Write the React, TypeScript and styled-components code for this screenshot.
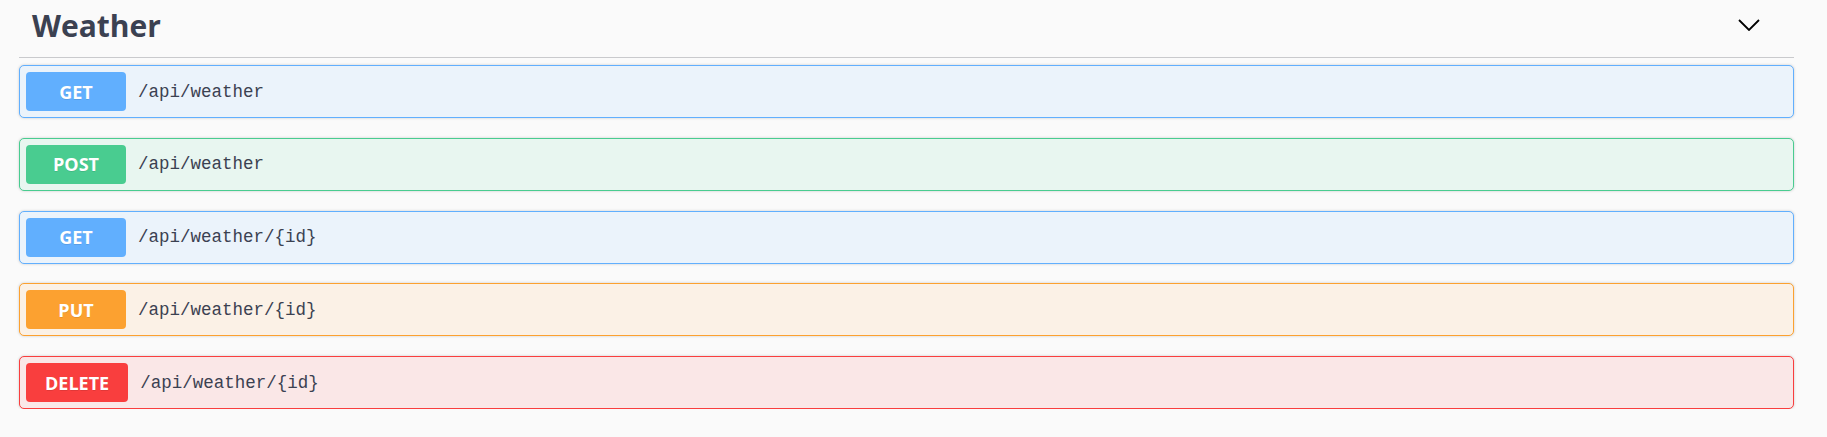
import React from "react";
import styled, { createGlobalStyle } from "styled-components";

const GlobalStyle = createGlobalStyle`
  html, body {
    margin: 0;
    padding: 0;
    background: #fafafa;
  }
`;

type Method = "GET" | "POST" | "PUT" | "DELETE";

const palette: Record<Method, { main: string; bg: string }> = {
  GET: { main: "#61affe", bg: "#ebf3fb" },
  POST: { main: "#49cc90", bg: "#e8f6f0" },
  PUT: { main: "#fca130", bg: "#fbf1e6" },
  DELETE: { main: "#f93e3e", bg: "#fae7e7" },
};

const Page = styled.div`
  width: 1775px;
  padding-left: 19px;
  font-family: "Open Sans", "Noto Sans", sans-serif;
  color: #3b4151;
`;

const TagHeader = styled.div`
  display: flex;
  justify-content: space-between;
  align-items: flex-start;
  height: 57px;
  padding: 0 34px 0 13px;
  border-bottom: 1px solid #c9cacd;
`;

const Title = styled.h4`
  margin: 5px 0 0;
  font-size: 30px;
  line-height: 42px;
  font-weight: 700;
  color: #3b4151;
`;

const Chevron = styled.svg`
  margin-top: 19px;
  width: 22px;
  height: 12px;
`;

const List = styled.div`
  display: flex;
  flex-direction: column;
  gap: 19.75px;
  margin-top: 7px;
`;

const Block = styled.div<{ $method: Method }>`
  display: flex;
  align-items: center;
  padding: 6px;
  border: 1px solid ${(p) => palette[p.$method].main};
  background: ${(p) => palette[p.$method].bg};
  border-radius: 5px;
  box-shadow: 0 0 3px rgba(0, 0, 0, 0.19);
`;

const MethodBadge = styled.span<{ $method: Method }>`
  display: flex;
  align-items: center;
  justify-content: center;
  box-sizing: border-box;
  min-width: 100px;
  height: 39px;
  padding: 0 19px;
  border-radius: 4px;
  background: ${(p) => palette[p.$method].main};
  color: #fff;
  font-family: "Open Sans", "Noto Sans", sans-serif;
  font-weight: 700;
  font-size: 18px;
  text-shadow: 0 1px 0 rgba(0, 0, 0, 0.1);
`;

const Path = styled.span`
  padding: 0 12px;
  font-family: "Liberation Mono", "DejaVu Sans Mono", monospace;
  font-size: 17.5px;
  color: #3b4151;
`;

const ops: { method: Method; path: string }[] = [
  { method: "GET", path: "/api/weather" },
  { method: "POST", path: "/api/weather" },
  { method: "GET", path: "/api/weather/{id}" },
  { method: "PUT", path: "/api/weather/{id}" },
  { method: "DELETE", path: "/api/weather/{id}" },
];

export default function App() {
  return (
    <>
      <GlobalStyle />
      <Page>
        <TagHeader>
          <Title>Weather</Title>
          <Chevron viewBox="0 0 22 12" fill="none">
            <path d="M1 1 L11 11 L21 1" stroke="#000" strokeWidth="1.8" />
          </Chevron>
        </TagHeader>
        <List>
          {ops.map((op, i) => (
            <Block key={i} $method={op.method}>
              <MethodBadge $method={op.method}>{op.method}</MethodBadge>
              <Path>{op.path}</Path>
            </Block>
          ))}
        </List>
      </Page>
    </>
  );
}
